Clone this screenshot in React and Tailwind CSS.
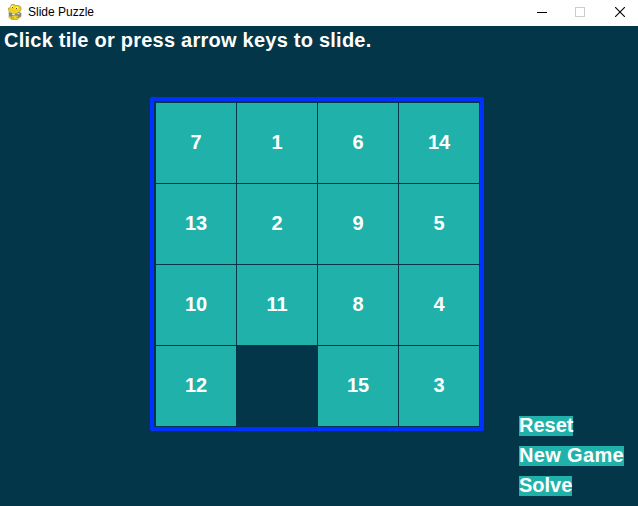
const tiles = [7, 1, 6, 14, 13, 2, 9, 5, 10, 11, 8, 4, 12, null, 15, 3];

function SnakeIcon() {
  return (
    <svg className="-mt-0.5 h-4 w-4" viewBox="0 0 16 16">
      <path d="M4.5 .5h3l1 1h3L14 3v3l-1.500 2 1.500 1.500v3L12 14l-1.500 1.500h-6L2 13.500v-2L4 10 2.500 8.500 1.500 6V4H3z" fill="#ead322" stroke="#9c8b28" strokeWidth=".6" />
      <path d="M4 2h2.500v2H4zM8.500 3H11v2H8.500z" fill="#fff69a" />
      <path d="M5 3h1v1H5zM9 4h1v1H9z" fill="#57502a" />
      <path d="M1.500 8.500h2.500l1.500 1h4l2-1.500L14 9v3.500l-3 .5-1-1.500H6L4.500 13 2 12z" fill="#85837c" />
      <path d="M5 9.500h3V11H5zM10.500 9h2v1.200h-2z" fill="#dedad0" />
      <path d="M4 13h3v1.500H4zM9 13h3v1H9z" fill="#c6a722" />
    </svg>
  );
}

function Action({ children, className }) {
  return (
    <button className={`flex h-5 items-start bg-[#20b2aa] pb-0.5 text-left text-[20px] leading-[18px] whitespace-nowrap ${className}`}>
      {children}
    </button>
  );
}

export default function App() {
  return (
    <div className="flex h-[506px] w-[638px] flex-col overflow-hidden bg-[#033649] font-['Liberation_Sans',Arial,sans-serif] text-white">
      <header className="flex h-[26px] shrink-0 items-center bg-white pr-[13px] pl-[7px] text-black">
        <SnakeIcon />
        <span className="-mt-0.5 ml-[5px] text-[12px] leading-4">Slide Puzzle</span>
        <div className="-mt-0.5 ml-auto flex items-center gap-[28px]">
          <svg className="h-[10px] w-[10px]" viewBox="0 0 10 10" shapeRendering="crispEdges"><path d="M0 5h10v1H0z" /></svg>
          <svg className="h-[10px] w-[10px]" viewBox="0 0 10 10" shapeRendering="crispEdges"><path d="M.5.5h9v9h-9z" fill="none" stroke="#ccc" /></svg>
          <svg className="ml-[2px] h-[10px] w-[10px]" viewBox="0 0 10 10"><path d="M0 0l10 10M10 0L0 10" stroke="#000" strokeWidth="1.1" /></svg>
        </div>
      </header>
      <main className="flex flex-1 flex-col font-bold">
        <p className="mt-[4px] ml-[4px] h-5 text-[20px] leading-5 tracking-[0.24px] whitespace-nowrap">Click tile or press arrow keys to slide.</p>
        <div className="mt-[47px] ml-[150px] h-[334px] w-[334px] rounded-[2px] border-4 border-[#0032ff] pt-[2px] pl-[2px]">
          <div className="grid grid-cols-[repeat(4,80px)] grid-rows-[repeat(4,80px)] gap-px">
            {tiles.map((n, i) => (
              <div key={i} className={`flex items-center justify-center pb-0.5 text-[20px] leading-5 ${n ? "bg-[#20b2aa]" : ""}`}>{n}</div>
            ))}
          </div>
        </div>
        <nav className="-mt-[15px] ml-[519px] flex flex-col items-start gap-[10px]">
          <Action className="w-[54px]">Reset</Action>
          <Action className="w-[105px] tracking-[0.35px]">New Game</Action>
          <Action className="w-[53px]">Solve</Action>
        </nav>
      </main>
    </div>
  );
}
